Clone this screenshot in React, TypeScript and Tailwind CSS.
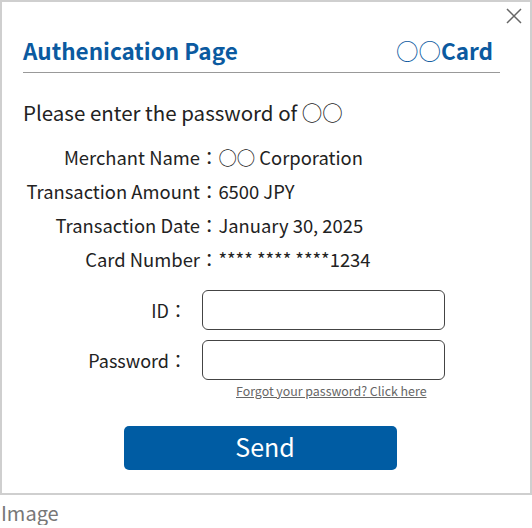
import { useState } from 'react';

const font = { fontFamily: '"Noto Sans CJK JP", "Noto Sans", sans-serif' };

const details = [
  { label: 'Merchant Name', value: '○○ Corporation' },
  { label: 'Transaction Amount', value: '6500 JPY' },
  { label: 'Transaction Date', value: 'January 30, 2025' },
  { label: 'Card Number', value: '**** **** ****1234' },
];

export default function App() {
  const [id, setId] = useState('');
  const [password, setPassword] = useState('');

  return (
    <div className="w-[532px] bg-white text-[#222]" style={font}>
      <div className="relative h-[495px] border-2 border-[#cfcfcf]">
        {/* Close button */}
        <button className="absolute right-[8px] top-[6px] h-[16px] w-[16px]">
          <svg viewBox="0 0 16 16" width="16" height="16">
            <path d="M1 1L15 15M15 1L1 15" stroke="#666" strokeWidth="1.5" fill="none" />
          </svg>
        </button>

        <div className="ml-[21px] mt-[34px] flex w-[477px] items-center justify-between border-b border-[#999] pb-[7px] pr-[7px]">
          <h1 className="text-[22.5px] font-bold leading-[29px] text-[#0b5aa0]">Authenication Page</h1>
          <span className="text-[22.5px] font-bold leading-[29px] text-[#0b5aa0]">
            <span className="font-normal">○○</span>Card
          </span>
        </div>

        <p className="ml-[21px] mt-[25px] text-[20.5px] leading-[28px]">Please enter the password of ○○</p>

        {/* Transaction details */}
        <div className="mt-[14px]">
          {details.map((d) => (
            <div key={d.label} className="flex text-[18.4px] leading-[34px]">
              <span className="w-[198px] text-right">{d.label}</span>
              <span>：</span>
              <span>{d.value}</span>
            </div>
          ))}
        </div>

        {/* Form */}
        <div className="mt-[14px] flex flex-col gap-[10px]">
          <div className="flex items-center">
            <span className="w-[185px] text-right text-[18px]">ID：</span>
            <input
              value={id}
              onChange={(e) => setId(e.target.value)}
              className="ml-[15px] h-[40px] w-[243px] rounded-md border border-[#444] px-2 outline-none"
            />
          </div>
          <div className="flex items-center">
            <span className="w-[185px] text-right text-[18px]">Password：</span>
            <input
              type="password"
              value={password}
              onChange={(e) => setPassword(e.target.value)}
              className="ml-[15px] h-[40px] w-[243px] rounded-md border border-[#444] px-2 outline-none"
            />
          </div>
        </div>
        <a href="#" className="ml-[234px] mt-[3px] block text-[12.4px] leading-[16px] text-[#666] underline">
          Forgot your password? Click here
        </a>

        <button className="ml-[122px] mt-[27px] h-[44px] w-[273px] rounded-[5px] bg-[#005ca3] pb-[5px] pl-[9px] text-[25px] leading-[30px] text-white">
          Send
        </button>
      </div>
      <p className="mt-[6px] pl-[1px] text-[20px] leading-[24px] text-[#777]">Image</p>
    </div>
  );
}
